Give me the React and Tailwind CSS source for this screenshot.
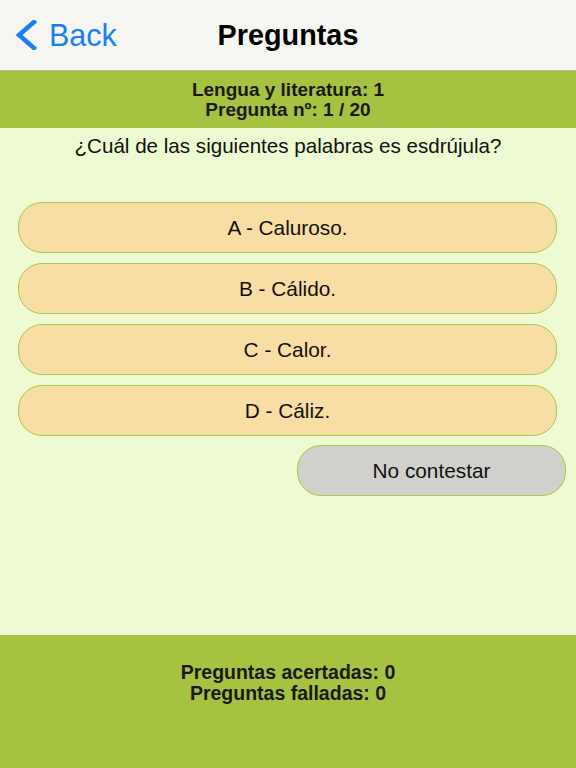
export default function App() {
    const options = ['A - Caluroso.', 'B - Cálido.', 'C - Calor.', 'D - Cáliz.']

    return (
        <div className="h-[768px] w-[576px] flex flex-col bg-[#eefad1] text-[#111] font-['Liberation_Sans',Arial,sans-serif]">
            <div className="h-[71px] shrink-0 flex items-center relative bg-[#f6f6f3] border-b border-[#b6b8a8]">
                <div className="flex items-center pl-[14px] text-[#1a7ff6]">
                    <svg width="24" height="30" viewBox="0 0 24 30" className="mr-[11px]">
                        <polyline points="20,2 5,15 20,28" fill="none" stroke="#1a7ff6" strokeWidth="4.5" strokeLinecap="square" />
                    </svg>
                    <span className="text-[30.5px] leading-none">Back</span>
                </div>
                <div className="absolute inset-0 flex items-center justify-center pointer-events-none">
                    <span className="text-[28.8px] font-bold leading-none text-black">Preguntas</span>
                </div>
            </div>

            <div className="h-[57px] shrink-0 flex flex-col items-center justify-center bg-[#a5c241] text-[19px] font-semibold leading-[20px] text-[#1a1a14]">
                <div>Lengua y literatura: 1</div>
                <div>Pregunta nº: 1 / 20</div>
            </div>

            <div className="flex-1 flex flex-col pt-[6px]">
                <div className="text-center text-[20.6px] leading-[24px]">¿Cuál de las siguientes palabras es esdrújula?</div>
                <div className="mt-[44px] flex flex-col gap-[10px] pl-[18px] pr-[19px]">
                    {options.map((o) => (
                        <div key={o} className="h-[51px] flex items-center justify-center rounded-[24px] border-[1.5px] border-[#a8c94b] bg-[#f8dea4] text-[20.8px]">
                            {o}
                        </div>
                    ))}
                </div>
                <div className="mt-[9px] flex justify-end pr-[10px]">
                    <div className="w-[269px] h-[51px] flex items-center justify-center rounded-[24px] border-[1.5px] border-[#a8c94b] bg-[#d0d0cd] text-[20.8px]">
                        No contestar
                    </div>
                </div>
            </div>

            <div className="h-[133px] shrink-0 flex flex-col items-center pt-[27px] bg-[#a5c241] text-[19.5px] font-semibold leading-[21px] text-[#1a1a14]">
                <div>Preguntas acertadas: 0</div>
                <div>Preguntas falladas: 0</div>
            </div>
        </div>
    )
}
